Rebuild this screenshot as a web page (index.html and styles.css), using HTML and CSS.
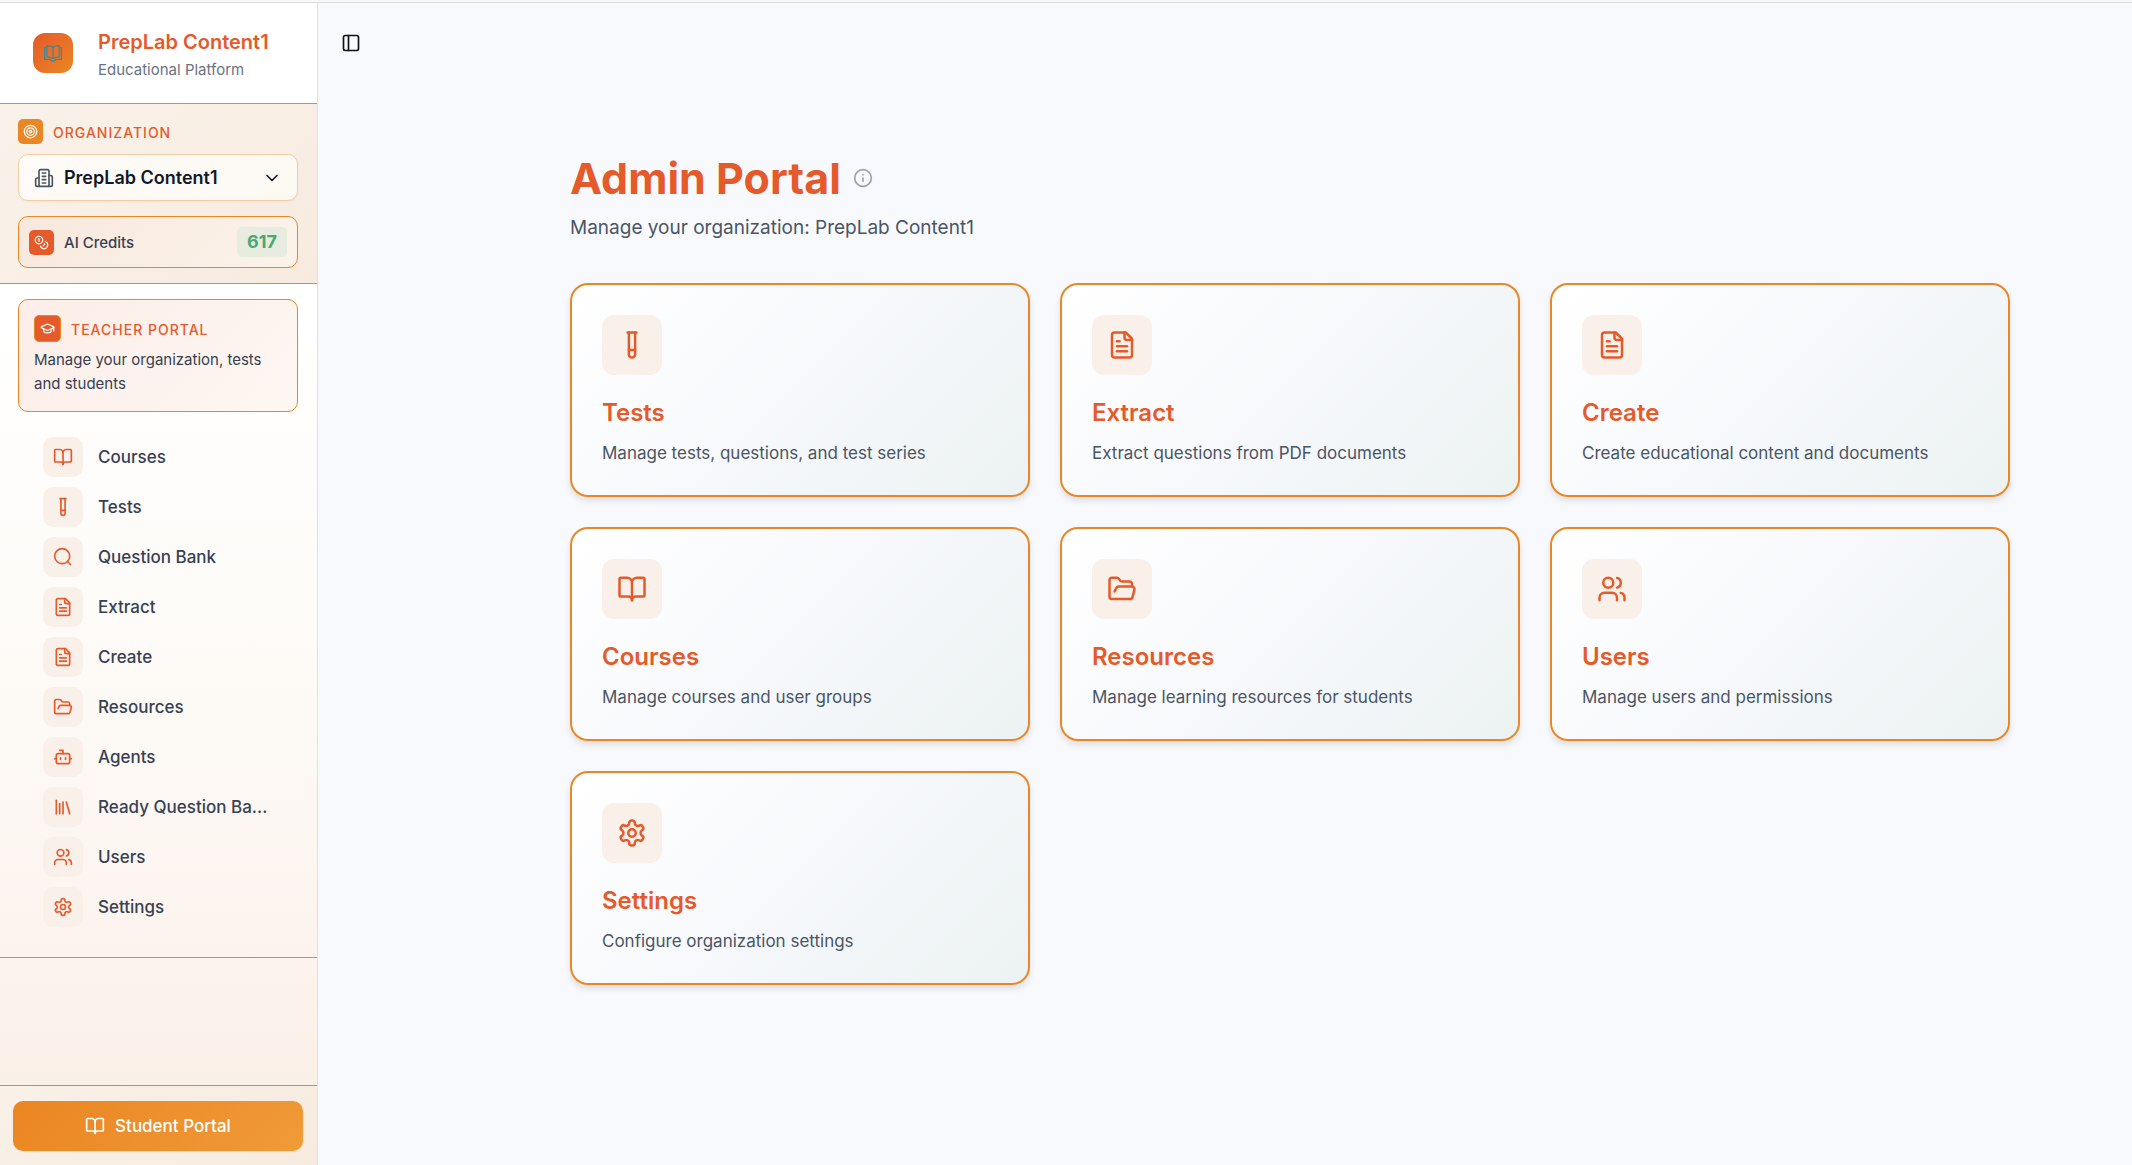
FILE: index.html
```
<!DOCTYPE html>
<html lang="en">
<head>
    <meta charset="UTF-8">
    <meta name="viewport" content="width=device-width, initial-scale=1.0">
    <title>Admin Portal</title>
    <link rel="stylesheet" href="styles.css">
</head>
<body>
    <svg class="sprite" aria-hidden="true">
        <symbol id="logo" viewBox="0 0 24 24"><path d="M12 5v13"/><path d="M12 5C10 3.500 7.500 3 4.500 3v13.500c3 0 5.500.5 7.500 2 2-1.500 4.500-2 7.500-2V3C16.500 3 14 3.500 12 5z"/><path d="M4.500 5.500H2v14h6.500l1.500 2h4l1.500-2H22v-14h-2.500"/></symbol>
        <symbol id="book" viewBox="0 0 24 24"><path d="M12 7v14"/><path d="M3 18a1 1 0 0 1-1-1V4a1 1 0 0 1 1-1h5a4 4 0 0 1 4 4 4 4 0 0 1 4-4h5a1 1 0 0 1 1 1v13a1 1 0 0 1-1 1h-6a3 3 0 0 0-3 3 3 3 0 0 0-3-3z"/></symbol>
        <symbol id="tube" viewBox="0 0 24 24"><path d="M14.5 2v17.5c0 1.4-1.1 2.5-2.5 2.5c-1.4 0-2.5-1.1-2.5-2.5V2"/><path d="M8.5 2h7"/><path d="M14.5 16h-5"/></symbol>
        <symbol id="search" viewBox="0 0 24 24"><circle cx="11" cy="11" r="9"/><path d="m21 21-3.6-3.6"/></symbol>
        <symbol id="file" viewBox="0 0 24 24"><path d="M15 2H6a2 2 0 0 0-2 2v16a2 2 0 0 0 2 2h12a2 2 0 0 0 2-2V7Z"/><path d="M14 2v4a2 2 0 0 0 2 2h4"/><path d="M10 9H8"/><path d="M16 13H8"/><path d="M16 17H8"/></symbol>
        <symbol id="folder" viewBox="0 0 24 24"><path d="m6 14 1.5-2.9A2 2 0 0 1 9.24 10H20a2 2 0 0 1 1.94 2.5l-1.54 6a2 2 0 0 1-1.95 1.5H4a2 2 0 0 1-2-2V5a2 2 0 0 1 2-2h3.9a2 2 0 0 1 1.69.9l.81 1.2a2 2 0 0 0 1.67.9H18a2 2 0 0 1 2 2v2"/></symbol>
        <symbol id="bot" viewBox="0 0 24 24"><path d="M12 8V4H8"/><rect width="16" height="12" x="4" y="8" rx="2"/><path d="M2 14h2"/><path d="M20 14h2"/><path d="M15 13v2"/><path d="M9 13v2"/></symbol>
        <symbol id="library" viewBox="0 0 24 24"><path d="m16 6 4 14"/><path d="M12 6v14"/><path d="M8 8v12"/><path d="M4 4v16"/></symbol>
        <symbol id="users" viewBox="0 0 24 24"><path d="M16 21v-2a4 4 0 0 0-4-4H6a4 4 0 0 0-4 4v2"/><circle cx="9" cy="7" r="4"/><path d="M22 21v-2a4 4 0 0 0-3-3.87"/><path d="M16 3.13a4 4 0 0 1 0 7.75"/></symbol>
        <symbol id="settings" viewBox="0 0 24 24"><path d="M12.22 2h-.44a2 2 0 0 0-2 2v.18a2 2 0 0 1-1 1.73l-.43.25a2 2 0 0 1-2 0l-.15-.08a2 2 0 0 0-2.73.73l-.22.38a2 2 0 0 0 .73 2.73l.15.1a2 2 0 0 1 1 1.72v.51a2 2 0 0 1-1 1.74l-.15.09a2 2 0 0 0-.73 2.73l.22.38a2 2 0 0 0 2.73.73l.15-.08a2 2 0 0 1 2 0l.43.25a2 2 0 0 1 1 1.73V20a2 2 0 0 0 2 2h.44a2 2 0 0 0 2-2v-.18a2 2 0 0 1 1-1.73l.43-.25a2 2 0 0 1 2 0l.15.08a2 2 0 0 0 2.73-.73l.22-.39a2 2 0 0 0-.73-2.73l-.15-.08a2 2 0 0 1-1-1.74v-.5a2 2 0 0 1 1-1.74l.15-.09a2 2 0 0 0 .73-2.73l-.22-.38a2 2 0 0 0-2.73-.73l-.15.08a2 2 0 0 1-2 0l-.43-.25a2 2 0 0 1-1-1.73V4a2 2 0 0 0-2-2z"/><circle cx="12" cy="12" r="3"/></symbol>
        <symbol id="target" viewBox="0 0 24 24"><circle cx="12" cy="12" r="10"/><circle cx="12" cy="12" r="6"/><circle cx="12" cy="12" r="2"/></symbol>
        <symbol id="building" viewBox="0 0 24 24"><path d="M6 22V4a2 2 0 0 1 2-2h8a2 2 0 0 1 2 2v18Z"/><path d="M6 12H4a2 2 0 0 0-2 2v6a2 2 0 0 0 2 2h2"/><path d="M18 9h2a2 2 0 0 1 2 2v9a2 2 0 0 1-2 2h-2"/><path d="M10 6h4"/><path d="M10 10h4"/><path d="M10 14h4"/><path d="M10 18h4"/></symbol>
        <symbol id="chevron" viewBox="0 0 24 24"><path d="m6 9 6 6 6-6"/></symbol>
        <symbol id="coins" viewBox="0 0 24 24"><circle cx="8" cy="8" r="6"/><path d="M18.09 10.37A6 6 0 1 1 10.34 18"/><path d="M7 6h1v4"/><path d="m16.71 13.88.7.71-2.82 2.82"/></symbol>
        <symbol id="cap" viewBox="0 0 24 24"><path d="M21.42 10.922a1 1 0 0 0-.019-1.838L12.83 5.18a2 2 0 0 0-1.66 0L2.6 9.08a1 1 0 0 0 0 1.832l8.57 3.908a2 2 0 0 0 1.66 0z"/><path d="M22 10v6"/><path d="M6 12.5V16a6 3 0 0 0 12 0v-3.5"/></symbol>
        <symbol id="panel" viewBox="0 0 24 24"><rect width="18" height="18" x="3" y="3" rx="2"/><path d="M9 3v18"/></symbol>
        <symbol id="info" viewBox="0 0 24 24"><circle cx="12" cy="12" r="10"/><path d="M12 16v-4"/><path d="M12 8h.01"/></symbol>
    </svg>

    <div class="layout">
        <aside class="sidebar">
            <header class="brand">
                <div class="brand-logo"><svg class="icon"><use href="#logo"/></svg></div>
                <div class="brand-text">
                    <p class="brand-name">PrepLab Content1</p>
                    <p class="brand-sub">Educational Platform</p>
                </div>
            </header>

            <section class="org">
                <label class="org-label" for="org-select">
                    <span class="chip chip-amber"><svg class="icon icon-sm"><use href="#target"/></svg></span>
                    <span class="caps">Organization</span>
                </label>
                <div class="org-picker">
                    <svg class="icon org-building"><use href="#building"/></svg>
                    <select id="org-select" class="org-select">
                        <option>PrepLab Content1</option>
                    </select>
                    <svg class="icon"><use href="#chevron"/></svg>
                </div>
                <div class="credits">
                    <span class="chip"><svg class="icon icon-sm"><use href="#coins"/></svg></span>
                    <span class="credits-label">AI Credits</span>
                    <span class="credits-count">617</span>
                </div>
            </section>

            <div class="menu">
                <section class="portal">
                    <div class="portal-head">
                        <span class="chip chip-outlined"><svg class="icon icon-sm"><use href="#cap"/></svg></span>
                        <h2 class="caps">Teacher Portal</h2>
                    </div>
                    <p class="portal-text">Manage your organization, tests and students</p>
                </section>
                <nav class="nav">
                    <a class="nav-link" href="#"><span class="nav-icon"><svg class="icon"><use href="#book"/></svg></span><span class="nav-text">Courses</span></a>
                    <a class="nav-link" href="#"><span class="nav-icon"><svg class="icon"><use href="#tube"/></svg></span><span class="nav-text">Tests</span></a>
                    <a class="nav-link" href="#"><span class="nav-icon"><svg class="icon"><use href="#search"/></svg></span><span class="nav-text">Question Bank</span></a>
                    <a class="nav-link" href="#"><span class="nav-icon"><svg class="icon"><use href="#file"/></svg></span><span class="nav-text">Extract</span></a>
                    <a class="nav-link" href="#"><span class="nav-icon"><svg class="icon"><use href="#file"/></svg></span><span class="nav-text">Create</span></a>
                    <a class="nav-link" href="#"><span class="nav-icon"><svg class="icon"><use href="#folder"/></svg></span><span class="nav-text">Resources</span></a>
                    <a class="nav-link" href="#"><span class="nav-icon"><svg class="icon"><use href="#bot"/></svg></span><span class="nav-text">Agents</span></a>
                    <a class="nav-link" href="#"><span class="nav-icon"><svg class="icon"><use href="#library"/></svg></span><span class="nav-text">Ready Question Ba...</span></a>
                    <a class="nav-link" href="#"><span class="nav-icon"><svg class="icon"><use href="#users"/></svg></span><span class="nav-text">Users</span></a>
                    <a class="nav-link" href="#"><span class="nav-icon"><svg class="icon"><use href="#settings"/></svg></span><span class="nav-text">Settings</span></a>
                </nav>
            </div>

            <footer class="sidebar-footer">
                <button class="student-btn" type="button"><svg class="icon"><use href="#book"/></svg>Student Portal</button>
            </footer>
        </aside>

        <div class="page">
            <header class="topbar">
                <button class="toggle" type="button" aria-label="Toggle sidebar"><svg class="icon"><use href="#panel"/></svg></button>
            </header>
            <main class="content">
                <div class="title-row">
                    <h1 class="title">Admin Portal</h1>
                    <svg class="icon info"><use href="#info"/></svg>
                </div>
                <p class="subtitle">Manage your organization: PrepLab Content1</p>
                <div class="cards">
                    <a class="card" href="#">
                        <span class="card-icon"><svg class="icon icon-lg"><use href="#tube"/></svg></span>
                        <h3 class="card-title">Tests</h3>
                        <p class="card-text">Manage tests, questions, and test series</p>
                    </a>
                    <a class="card" href="#">
                        <span class="card-icon"><svg class="icon icon-lg"><use href="#file"/></svg></span>
                        <h3 class="card-title">Extract</h3>
                        <p class="card-text">Extract questions from PDF documents</p>
                    </a>
                    <a class="card" href="#">
                        <span class="card-icon"><svg class="icon icon-lg"><use href="#file"/></svg></span>
                        <h3 class="card-title">Create</h3>
                        <p class="card-text">Create educational content and documents</p>
                    </a>
                    <a class="card" href="#">
                        <span class="card-icon"><svg class="icon icon-lg"><use href="#book"/></svg></span>
                        <h3 class="card-title">Courses</h3>
                        <p class="card-text">Manage courses and user groups</p>
                    </a>
                    <a class="card" href="#">
                        <span class="card-icon"><svg class="icon icon-lg"><use href="#folder"/></svg></span>
                        <h3 class="card-title">Resources</h3>
                        <p class="card-text">Manage learning resources for students</p>
                    </a>
                    <a class="card" href="#">
                        <span class="card-icon"><svg class="icon icon-lg"><use href="#users"/></svg></span>
                        <h3 class="card-title">Users</h3>
                        <p class="card-text">Manage users and permissions</p>
                    </a>
                    <a class="card" href="#">
                        <span class="card-icon"><svg class="icon icon-lg"><use href="#settings"/></svg></span>
                        <h3 class="card-title">Settings</h3>
                        <p class="card-text">Configure organization settings</p>
                    </a>
                </div>
            </main>
        </div>
    </div>
</body>
</html>
```
FILE: styles.css
```
:root {
    --primary: #e55a2b;
    --amber: #e98727;
    --ink: #374151;
    --muted: #4b5563;
}
* {
    box-sizing: border-box;
    margin: 0;
    padding: 0;
}
body {
    font-family: Inter, "Liberation Sans", sans-serif;
    color: var(--ink);
    background: #f8f9fd;
    border-top: 2px solid #f8f8f8;
}
a {
    color: inherit;
    text-decoration: none;
}
button, select {
    font: inherit;
    border: none;
    background: none;
    cursor: pointer;
}
.sprite {
    display: none;
}
.icon {
    width: 20px;
    height: 20px;
    flex-shrink: 0;
    fill: none;
    stroke: currentColor;
    stroke-width: 2;
    stroke-linecap: round;
    stroke-linejoin: round;
}
.icon-sm {
    width: 15px;
    height: 15px;
}
.icon-lg {
    width: 30px;
    height: 30px;
}
.layout {
    display: flex;
    min-height: calc(100vh - 2px);
    border-top: 1px solid #dcdde0;
}

/* sidebar */
.sidebar {
    display: flex;
    flex-direction: column;
    flex-shrink: 0;
    width: 318px;
    border-right: 1px solid #dfe1e8;
    background: linear-gradient(to bottom, #fff 25%, #fdfaf6 60%, #fcf3ee 82%, #f8eee3 100%);
}
.brand {
    display: flex;
    align-items: center;
    gap: 25px;
    height: 101px;
    padding: 0 33px;
    background: #fff;
    border-bottom: 1px solid var(--amber);
}
.brand-logo {
    display: flex;
    align-items: center;
    justify-content: center;
    width: 40px;
    height: 40px;
    border-radius: 12px;
    color: #4b8391;
    background: linear-gradient(135deg, var(--primary), #eb8722);
}
.brand-logo .icon {
    stroke-width: 1.5;
}
.brand-text {
    padding-top: 2px;
    white-space: nowrap;
}
.brand-name {
    font-size: 20px;
    line-height: 30px;
    font-weight: 600;
    color: var(--primary);
}
.brand-sub {
    font-size: 15px;
    line-height: 25px;
    color: #6b7280;
}
.org {
    padding: 15px 19px 15px 18px;
    background: linear-gradient(135deg, #f9f2ea, #f7ebdf);
    border-bottom: 1px solid var(--amber);
}
.org-label {
    display: flex;
    align-items: center;
    gap: 10px;
}
.chip {
    display: flex;
    align-items: center;
    justify-content: center;
    width: 25px;
    height: 25px;
    border-radius: 5px;
    color: #fff;
    background: var(--primary);
}
.chip-amber {
    background: var(--amber);
}
.chip-outlined {
    width: 27px;
    height: 27px;
    border: 1px solid var(--amber);
}
.caps {
    padding-top: 2px;
    font-size: 14px;
    line-height: 20px;
    font-weight: 500;
    letter-spacing: 1px;
    text-transform: uppercase;
    color: var(--primary);
}
.org-picker {
    display: flex;
    align-items: center;
    height: 47px;
    margin-top: 10px;
    padding: 0 15px;
    border: 1px solid #f4cda4;
    border-radius: 10px;
    color: #111827;
    background: linear-gradient(135deg, #fefbf8, #fcf8f2);
    box-shadow: 0 1px 2px rgba(0, 0, 0, 0.05);
}
.org-building {
    color: var(--muted);
}
.org-select {
    flex: 1;
    padding-left: 10px;
    appearance: none;
    font-size: 18px;
    font-weight: 600;
    color: #111827;
}
.credits {
    display: flex;
    align-items: center;
    height: 52px;
    margin-top: 15px;
    padding: 0 10px;
    border: 1px solid var(--amber);
    border-radius: 10px;
    background: linear-gradient(135deg, #f8e8dd, #fbf3ea);
}
.credits-label {
    flex: 1;
    padding-left: 10px;
    font-size: 15px;
    font-weight: 500;
}
.credits-count {
    padding: 0 10px;
    border-radius: 5px;
    font-size: 18px;
    line-height: 30px;
    font-weight: 700;
    color: #48a877;
    background: #e8ecdf;
}
.menu {
    padding: 15px 19px 30px 18px;
    border-bottom: 1px solid var(--amber);
}
.portal {
    padding: 15px;
    border: 1px solid var(--amber);
    border-radius: 10px;
    background: linear-gradient(135deg, #fcede8, #fdf7f2);
}
.portal-head {
    display: flex;
    align-items: center;
    gap: 10px;
}
.portal-text {
    margin-top: 6px;
    font-size: 15px;
    line-height: 24px;
}
.nav {
    display: flex;
    flex-direction: column;
    gap: 10px;
    margin-top: 25px;
    padding: 0 25px;
}
.nav-link {
    display: flex;
    align-items: center;
    gap: 15px;
    font-size: 17px;
    font-weight: 500;
}
.nav-icon {
    display: flex;
    align-items: center;
    justify-content: center;
    flex-shrink: 0;
    width: 40px;
    height: 40px;
    border-radius: 10px;
    color: var(--primary);
    background: #faf0ea;
}
.nav-text {
    white-space: nowrap;
}
.sidebar-footer {
    margin-top: auto;
    padding: 15px 14px 14px 13px;
    border-top: 1px solid var(--amber);
    background: linear-gradient(135deg, #f8f1e7, #f7ebdf);
}
.student-btn {
    display: flex;
    align-items: center;
    justify-content: center;
    gap: 10px;
    width: 100%;
    height: 50px;
    border-radius: 10px;
    font-size: 17px;
    font-weight: 500;
    color: #fff;
    background: linear-gradient(135deg, #ea8622, #f09a38);
    box-shadow: 0 1px 2px rgba(0, 0, 0, 0.05);
}

/* page */
.page {
    flex: 1;
    min-width: 0;
}
.topbar {
    display: flex;
    align-items: center;
    height: 80px;
    padding: 0 15px;
}
.toggle {
    display: flex;
    align-items: center;
    justify-content: center;
    width: 36px;
    height: 36px;
    color: #111;
}
.content {
    max-width: 1570px;
    margin: 0 auto;
    padding: 70px 0 70px 130px;
}
.title-row {
    display: flex;
    align-items: center;
    gap: 12px;
}
.title {
    font-size: 43px;
    line-height: 50px;
    font-weight: 700;
    color: var(--primary);
}
.info {
    color: #9ca3af;
}
.subtitle {
    margin-top: 10px;
    font-size: 19px;
    line-height: 30px;
    color: var(--muted);
}
.cards {
    display: grid;
    grid-template-columns: repeat(3, 1fr);
    gap: 30px;
    margin-top: 40px;
}
.card {
    padding: 30px 30px 29px;
    border: 2px solid var(--amber);
    border-radius: 18px;
    background: linear-gradient(135deg, #fff, #f6f8fb 50%, #ecf2f2);
    box-shadow: 0 4px 6px rgba(0, 0, 0, 0.1);
}
.card-icon {
    display: flex;
    align-items: center;
    justify-content: center;
    width: 60px;
    height: 60px;
    border-radius: 12px;
    color: var(--primary);
    background: #faf0ea;
}
.card-title {
    margin-top: 20px;
    font-size: 24px;
    line-height: 36px;
    font-weight: 600;
    color: var(--primary);
}
.card-text {
    margin-top: 10px;
    font-size: 17px;
    line-height: 25px;
    color: var(--muted);
}
```
